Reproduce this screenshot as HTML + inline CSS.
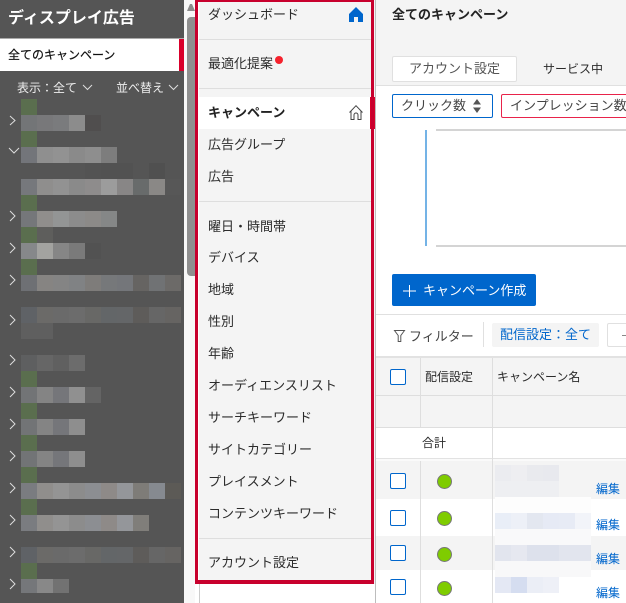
<!DOCTYPE html>
<html><head><meta charset="utf-8">
<style>
html,body{margin:0;padding:0}
body{width:626px;height:603px;overflow:hidden;position:relative;background:#fff;font-family:"Liberation Sans","Noto Sans CJK JP",sans-serif;font-size:13px;color:#2b2b2b}
.a{position:absolute}
.t{position:absolute;white-space:nowrap;line-height:18px}
.r{position:absolute;left:21px;height:16px;display:flex}
.r i{display:block;width:16px;height:16px}
.g{position:absolute;left:21px;width:16px;height:16px;background:#5a6e4e}
.m{left:208px}
.d{position:absolute;left:199px;width:172px;height:1px;background:#dedede}
.cb{position:absolute;left:390px;width:14px;height:14px;border:1px solid #0066cc;border-radius:2px;background:#fff}
.dot{position:absolute;left:437px;width:13px;height:13px;border-radius:50%;background:#7fcc00;border:1px solid #777}
.e{color:#0066cc;left:596px}
svg{position:absolute;overflow:visible}
</style></head><body>

<!-- left sidebar -->
<div class="a" style="left:0;top:0;width:184px;height:603px;background:#555"></div>
<div class="t" style="left:8px;top:9px;font-size:16px;font-weight:bold;color:#fff;line-height:20px">ディスプレイ広告</div>
<div class="a" style="left:0;top:38px;width:184px;height:33px;background:#fff;border-top:1px solid #aaa;box-sizing:border-box"></div>
<div class="a" style="left:179px;top:39px;width:5px;height:32px;background:#d9002b"></div>
<div class="t" style="left:8px;top:46px;color:#111;font-size:12px;-webkit-text-stroke:0.2px #111">全てのキャンペーン</div>
<div class="t" style="left:17px;top:79px;color:#eee;font-size:12px">表示：全て</div>
<div class="t" style="left:116px;top:79px;color:#eee;font-size:12px">並べ替え</div>
<svg style="left:0;top:0" width="184" height="603" fill="none" stroke="#ddd" stroke-width="1">
<path d="M83 85l4.500 4.500 4.500-4.500M169 85l4.500 4.500 4.500-4.500"/>
<path d="M10 116l5 4.500-5 4.500M9 148l5 5 5-5M10 211l5 5-5 5M10 243l5 5-5 5M10 275l5 5-5 5M10 315l5 5-5 5M10 355l5 5-5 5M10 387l5 5-5 5M10 419l5 5-5 5M10 451l5 5-5 5M10 483l5 5-5 5M10 515l5 5-5 5M10 547l5 5-5 5M10 579l5 5-5 5"/>
</svg>

<div class="g" style="top:99px"></div>
<div class="r" style="top:115px"><i style="background:#737577"></i><i style="background:#78787a"></i><i style="background:#7a7b7d"></i><i style="background:#8c8c8c"></i><i style="background:#504e4e"></i></div>
<div class="g" style="top:131px"></div>
<div class="r" style="top:147px"><i style="background:#73757a"></i><i style="background:#8f8f8f"></i><i style="background:#929292"></i><i style="background:#8a8a8a"></i><i style="background:#8e8e8e"></i><i style="background:#7d7d7d"></i></div>
<div class="r" style="top:163px;left:85px"><i style="background:#535353"></i><i style="background:#525252"></i><i style="background:#525252"></i><i style="background:#555"></i><i style="background:#505050"></i></div>
<div class="r" style="top:179px"><i style="background:#76787c"></i><i style="background:#8f8e8d"></i><i style="background:#929292"></i><i style="background:#8a8a8a"></i><i style="background:#8e8c8c"></i><i style="background:#9c9c9c"></i><i style="background:#888686"></i><i style="background:#686b6b"></i><i style="background:#8a8886"></i><i style="background:#575757"></i></div>
<div class="g" style="top:195px"></div>
<div class="r" style="top:211px"><i style="background:#75777a"></i><i style="background:#908e8c"></i><i style="background:#939595"></i><i style="background:#8c8c8c"></i><i style="background:#8c8a88"></i><i style="background:#858787"></i></div>
<div class="g" style="top:227px"></div>
<div class="a" style="left:37px;top:227px;width:16px;height:16px;background:#5e5e5c"></div>
<div class="r" style="top:243px"><i style="background:#86888a"></i><i style="background:#a3a3a0"></i><i style="background:#868686"></i><i style="background:#7a7a7a"></i><i style="background:#525252"></i></div>
<div class="g" style="top:259px"></div>
<div class="r" style="top:275px"><i style="background:#6e7074"></i><i style="background:#868482"></i><i style="background:#848484"></i><i style="background:#808284"></i><i style="background:#7e7c7a"></i><i style="background:#76787a"></i><i style="background:#74767a"></i><i style="background:#666462"></i><i style="background:#707274"></i><i style="background:#6c6a68"></i></div>
<div class="r" style="top:307px"><i style="background:#5f6266"></i><i style="background:#6b6a68"></i><i style="background:#6a6a6a"></i><i style="background:#6c6c6c"></i><i style="background:#686866"></i><i style="background:#636668"></i><i style="background:#646668"></i><i style="background:#5e5c5a"></i><i style="background:#666666"></i><i style="background:#666462"></i></div>
<div class="r" style="top:323px"><i style="background:#5f5f5f"></i><i style="background:#5f5f5f"></i></div>
<div class="r" style="top:355px"><i style="background:#5e5f60"></i><i style="background:#666666"></i><i style="background:#606060"></i><i style="background:#6c6c6c"></i></div>
<div class="g" style="top:371px"></div>
<div class="r" style="top:387px"><i style="background:#727476"></i><i style="background:#848484"></i><i style="background:#75767a"></i><i style="background:#909090"></i><i style="background:#646464"></i></div>
<div class="g" style="top:403px"></div>
<div class="r" style="top:419px"><i style="background:#727476"></i><i style="background:#848484"></i><i style="background:#75767a"></i><i style="background:#8e8e8e"></i></div>
<div class="g" style="top:435px"></div>
<div class="r" style="top:451px"><i style="background:#727476"></i><i style="background:#848484"></i><i style="background:#75767a"></i><i style="background:#8e8e8e"></i></div>
<div class="g" style="top:467px"></div>
<div class="r" style="top:483px"><i style="background:#7a7c80"></i><i style="background:#908e8c"></i><i style="background:#949494"></i><i style="background:#8c8c8c"></i><i style="background:#8c8e92"></i><i style="background:#8e8a88"></i><i style="background:#94969a"></i><i style="background:#7e7c78"></i><i style="background:#868a90"></i><i style="background:#5c5a56"></i></div>
<div class="g" style="top:499px"></div>
<div class="r" style="top:515px"><i style="background:#7a7c80"></i><i style="background:#908e8c"></i><i style="background:#949494"></i><i style="background:#8c8c8c"></i><i style="background:#8c8e92"></i><i style="background:#8e8a88"></i><i style="background:#94969a"></i><i style="background:#807e7a"></i></div>
<div class="r" style="top:547px"><i style="background:#5f6266"></i><i style="background:#6b6a68"></i><i style="background:#6a6a6a"></i><i style="background:#6c6c6c"></i><i style="background:#686866"></i><i style="background:#636668"></i><i style="background:#646668"></i><i style="background:#5e5c5a"></i><i style="background:#666666"></i><i style="background:#666462"></i></div>
<div class="g" style="top:563px"></div>
<div class="r" style="top:579px;height:14px"><i style="background:#75777a;height:14px"></i><i style="background:#888888;height:14px"></i><i style="background:#727272;height:14px"></i></div>

<!-- scrollbar -->
<div class="a" style="left:184px;top:0;width:11px;height:603px;background:#f8f8f8"></div>
<svg style="left:184px;top:0" width="11" height="14"><path d="M3 11L6 4h2l3 7z" fill="#8c8c8c"/></svg>
<div class="a" style="left:187px;top:17px;width:8px;height:259px;background:#8f8f8f;border-radius:4px 0 0 4px"></div>

<!-- menu -->
<div class="a" style="left:199px;top:0;width:176px;height:603px;background:#f4f4f4"></div>
<div class="a" style="left:375px;top:0;width:1px;height:603px;background:#bdbdbd"></div>
<div class="a" style="left:199px;top:584px;width:176px;height:19px;background:#fff;border-left:1px solid #ccc;box-sizing:border-box"></div>
<div class="d" style="top:39px"></div><div class="d" style="top:88px"></div><div class="d" style="top:201px"></div><div class="d" style="top:538px"></div>
<div class="a" style="left:199px;top:97px;width:172px;height:32px;background:#fff"></div>
<div class="a" style="left:370px;top:97px;width:5px;height:32px;background:#d9002b"></div>

<div class="t m" style="top:6px">ダッシュボード</div>
<div class="t m" style="top:55px">最適化提案</div>
<div class="a" style="left:275px;top:56px;width:8px;height:8px;border-radius:50%;background:#f5222d"></div>
<div class="t m" style="top:104px;font-weight:bold;color:#222">キャンペーン</div>
<div class="t m" style="top:136px">広告グループ</div>
<div class="t m" style="top:168px">広告</div>
<div class="t m" style="top:218px">曜日・時間帯</div>
<div class="t m" style="top:249px">デバイス</div>
<div class="t m" style="top:281px">地域</div>
<div class="t m" style="top:313px">性別</div>
<div class="t m" style="top:345px">年齢</div>
<div class="t m" style="top:377px">オーディエンスリスト</div>
<div class="t m" style="top:409px">サーチキーワード</div>
<div class="t m" style="top:441px">サイトカテゴリー</div>
<div class="t m" style="top:473px">プレイスメント</div>
<div class="t m" style="top:505px">コンテンツキーワード</div>
<div class="t m" style="top:554px">アカウント設定</div>

<svg style="left:349px;top:7px" width="14" height="15"><path d="M7 0L14 7V15H9V10H5V15H0V7Z" fill="#0066cc"/></svg>
<svg style="left:349px;top:105px" width="14" height="15" fill="none" stroke="#444" stroke-width="1"><path d="M0.500 7.500L7 0.700l6.500 6.800M2 6V14.500h3V10a2 2 0 0 1 4 0v4.500h3V6"/></svg>

<!-- red highlight -->
<div class="a" style="left:195px;top:0;width:179px;height:584px;border:3px solid #c8002d;border-top-width:2px;border-bottom-width:4px;box-sizing:border-box"></div>

<!-- main header -->
<div class="a" style="left:376px;top:0;width:250px;height:86px;background:#f4f4f4;border-bottom:1px solid #e0e0e0;box-sizing:border-box"></div>
<div class="t" style="left:392px;top:6px;font-weight:bold;color:#222;font-size:13px">全てのキャンペーン</div>
<div class="a" style="left:392px;top:56px;width:125px;height:26px;background:#fff;border:1px solid #e0e0e0;border-radius:2px;box-sizing:border-box"></div>
<div class="t" style="left:409px;top:60px;color:#555">アカウント設定</div>
<div class="t" style="left:543px;top:60px;color:#2b2b2b;font-size:12px">サービス中</div>

<div class="a" style="left:392px;top:94px;width:101px;height:24px;border:1px solid #0066cc;border-radius:2px;box-sizing:border-box"></div>
<div class="t" style="left:401px;top:97px;color:#444">クリック数</div>
<svg style="left:472px;top:99px" width="10" height="14" fill="#555"><path d="M1 5.500L5 0l4 5.500zM1 8.500h8L5 14z"/></svg>
<div class="a" style="left:501px;top:94px;width:140px;height:24px;border:1px solid #e8234a;border-radius:2px;box-sizing:border-box"></div>
<div class="t" style="left:510px;top:97px;color:#444">インプレッション数</div>

<!-- chart -->
<div class="a" style="left:425px;top:130px;width:2px;height:116px;background:#74b3e6"></div>
<div class="a" style="left:436px;top:129px;width:190px;height:2px;background:#d4d4d4"></div>
<div class="a" style="left:436px;top:245px;width:190px;height:2px;background:#d4d4d4"></div>

<!-- button -->
<div class="a" style="left:392px;top:274px;width:144px;height:32px;background:#0066cc;border-radius:2px"></div>
<svg style="left:403px;top:285px" width="13" height="12" stroke="#fff" stroke-width="1"><path d="M6.500 0v12M0 6h13"/></svg>
<div class="t" style="left:423px;top:282px;color:#fff">キャンペーン作成</div>

<div class="a" style="left:376px;top:314px;width:250px;height:1px;background:#e0e0e0"></div>
<svg style="left:394px;top:330px" width="11" height="12" fill="none" stroke="#555"><path d="M0.500 0.500h10L6.800 5.500V11.500H4.200V5.500z"/></svg>
<div class="t" style="left:409px;top:328px;color:#444">フィルター</div>
<div class="a" style="left:483px;top:322px;width:1px;height:25px;background:#e0e0e0"></div>
<div class="a" style="left:492px;top:323px;width:107px;height:24px;background:#f4f4f4;border-radius:2px"></div>
<div class="t" style="left:500px;top:326px;color:#0066cc">配信設定：全て</div>
<div class="a" style="left:607px;top:323px;width:30px;height:24px;background:#fff;border:1px solid #e0e0e0;border-radius:2px;box-sizing:border-box"></div>
<div class="a" style="left:622px;top:335px;width:4px;height:1px;background:#888"></div>

<!-- table -->
<div class="a" style="left:376px;top:356px;width:250px;height:71px;background:#f4f4f4;border-top:2px solid #e2e2e2;box-sizing:border-box"></div>
<div class="a" style="left:376px;top:395px;width:250px;height:1px;background:#dedede"></div>
<div class="a" style="left:376px;top:427px;width:250px;height:1px;background:#dedede"></div>
<div class="a" style="left:376px;top:458px;width:250px;height:1px;background:#e2e2e2"></div>
<div class="a" style="left:376px;top:459px;width:250px;height:2px;background:#fafafa"></div>
<div class="a" style="left:376px;top:461px;width:250px;height:38px;background:#f4f4f4"></div>
<div class="a" style="left:376px;top:536px;width:250px;height:34px;background:#f4f4f4"></div>

<div class="a" style="left:420px;top:358px;width:1px;height:69px;background:#dedede"></div>
<div class="a" style="left:420px;top:461px;width:1px;height:142px;background:#dedede"></div>
<div class="a" style="left:492px;top:358px;width:1px;height:245px;background:#dedede"></div>

<div class="cb" style="top:369px"></div>
<div class="t" style="left:425px;top:368px;font-size:12px">配信設定</div>
<div class="t" style="left:497px;top:368px;font-size:12px">キャンペーン名</div>
<div class="t" style="left:422px;top:434px;font-size:12px">合計</div>

<div class="cb" style="top:473px"></div><div class="cb" style="top:510px"></div><div class="cb" style="top:545px"></div><div class="cb" style="top:579px"></div>
<div class="dot" style="top:474px"></div><div class="dot" style="top:511px"></div><div class="dot" style="top:547px"></div><div class="dot" style="top:581px"></div>

<!-- blurred names -->
<div class="a" style="left:495px;top:465px;width:16px;height:16px;background:#ebecf0"></div>
<div class="a" style="left:511px;top:465px;width:16px;height:16px;background:#eeeef1"></div>
<div class="a" style="left:527px;top:465px;width:16px;height:16px;background:#e9eaee"></div>
<div class="a" style="left:543px;top:465px;width:16px;height:16px;background:#e8e9ee"></div>
<div class="a" style="left:495px;top:481px;width:64px;height:16px;background:#eeeff2"></div>
<div class="a" style="left:495px;top:497px;width:96px;height:16px;background:#fdfdfd"></div>
<div class="a" style="left:495px;top:513px;width:16px;height:16px;background:#e9eef7"></div>
<div class="a" style="left:511px;top:513px;width:16px;height:16px;background:#edf0f7"></div>
<div class="a" style="left:527px;top:513px;width:16px;height:16px;background:#e3e7f0"></div>
<div class="a" style="left:543px;top:513px;width:16px;height:16px;background:#e6eaf5"></div>
<div class="a" style="left:559px;top:513px;width:16px;height:16px;background:#e7ebf5"></div>
<div class="a" style="left:575px;top:513px;width:16px;height:16px;background:#f2f4f9"></div>
<div class="a" style="left:495px;top:529px;width:96px;height:16px;background:#f9f9fa"></div>
<div class="a" style="left:495px;top:545px;width:16px;height:16px;background:#e2e5ee"></div>
<div class="a" style="left:511px;top:545px;width:16px;height:16px;background:#e6e8f0"></div>
<div class="a" style="left:527px;top:545px;width:32px;height:16px;background:#dde1ec"></div>
<div class="a" style="left:559px;top:545px;width:32px;height:16px;background:#e2e5ee"></div>
<div class="a" style="left:495px;top:561px;width:96px;height:16px;background:#f8f8f9"></div>
<div class="a" style="left:495px;top:577px;width:16px;height:16px;background:#e4e8f4"></div>
<div class="a" style="left:511px;top:577px;width:16px;height:16px;background:#d5ddf0"></div>
<div class="a" style="left:527px;top:577px;width:16px;height:16px;background:#ebeef6"></div>
<div class="a" style="left:543px;top:577px;width:16px;height:16px;background:#eef0f7"></div>

<div class="t e" style="top:480px;font-size:12px">編集</div>
<div class="t e" style="top:516px;font-size:12px">編集</div>
<div class="t e" style="top:550px;font-size:12px">編集</div>
<div class="t e" style="top:584px;font-size:12px">編集</div>

</body></html>
